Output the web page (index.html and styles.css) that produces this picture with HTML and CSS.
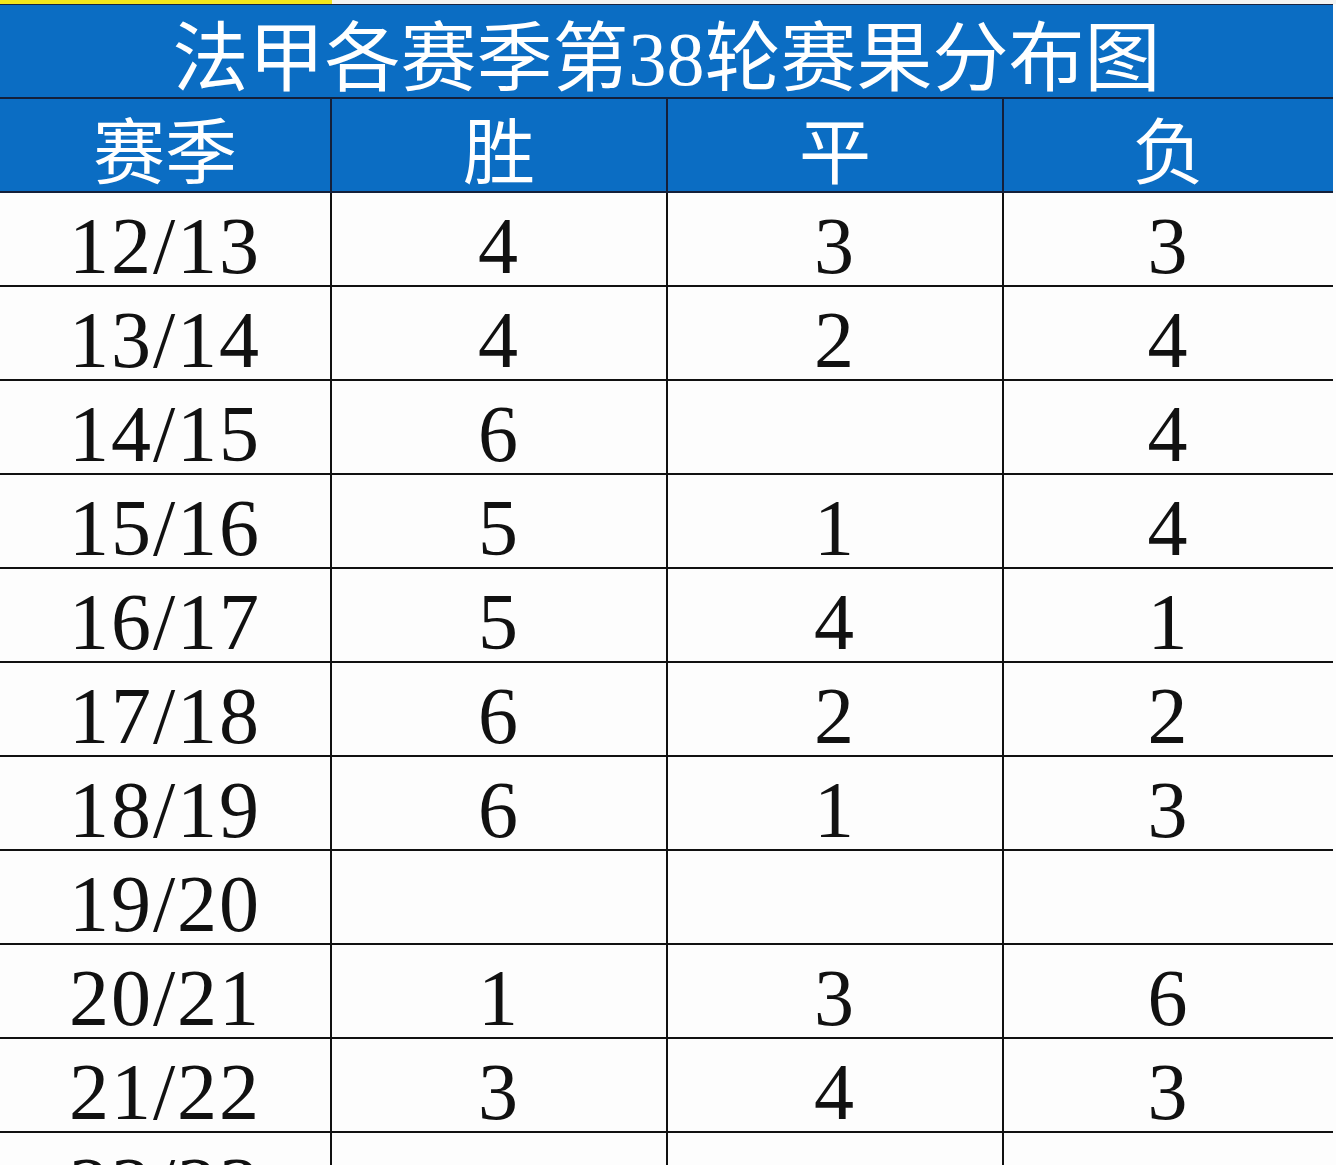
FILE: index.html
```html
<!DOCTYPE html>
<html lang="zh">
<head>
<meta charset="utf-8">
<title>法甲各赛季第38轮赛果分布图</title>
<link rel="stylesheet" href="styles.css">
</head>
<body>
<div class="topstrip"><div class="yellow"></div></div>
<div class="sheet">
  <div class="title">法甲各赛季第38轮赛果分布图</div>
  <div class="cell head">赛季</div><div class="cell head">胜</div><div class="cell head">平</div><div class="cell head last">负</div>
  <div class="cell">12/13</div><div class="cell">4</div><div class="cell">3</div><div class="cell last">3</div>
  <div class="cell">13/14</div><div class="cell">4</div><div class="cell">2</div><div class="cell last">4</div>
  <div class="cell">14/15</div><div class="cell">6</div><div class="cell"></div><div class="cell last">4</div>
  <div class="cell">15/16</div><div class="cell">5</div><div class="cell">1</div><div class="cell last">4</div>
  <div class="cell">16/17</div><div class="cell">5</div><div class="cell">4</div><div class="cell last">1</div>
  <div class="cell">17/18</div><div class="cell">6</div><div class="cell">2</div><div class="cell last">2</div>
  <div class="cell">18/19</div><div class="cell">6</div><div class="cell">1</div><div class="cell last">3</div>
  <div class="cell">19/20</div><div class="cell"></div><div class="cell"></div><div class="cell last"></div>
  <div class="cell">20/21</div><div class="cell">1</div><div class="cell">3</div><div class="cell last">6</div>
  <div class="cell">21/22</div><div class="cell">3</div><div class="cell">4</div><div class="cell last">3</div>
  <div class="cell">22/23</div><div class="cell"></div><div class="cell"></div><div class="cell last"></div>
</div>
</body>
</html>
```
FILE: styles.css
```css
html, body {
  margin: 0;
  padding: 0;
  background: #fdfdfd;
  overflow: hidden;
}
.topstrip {
  height: 4px;
  background: #f4f4f2;
}
.yellow {
  width: 332px;
  height: 4px;
  background: #f3e61a;
}
.sheet {
  width: 1333px;
  display: grid;
  grid-template-columns: 332px 336px 336px 329px;
  grid-auto-rows: 94px;
  border-top: 1px solid #1a2440;
}
.title {
  grid-column: 1 / 5;
  height: 94px;
  box-sizing: border-box;
  background: #0b6dc3;
  border-bottom: 2px solid #14203a;
  color: #fff;
  font-family: "Liberation Serif", "Noto Sans CJK SC", serif;
  font-size: 76px;
  line-height: 1;
  display: flex;
  align-items: center;
  justify-content: center;
  padding-top: 16px;
}
.cell {
  box-sizing: border-box;
  border-right: 2px solid #111;
  border-bottom: 2px solid #111;
  display: flex;
  align-items: center;
  justify-content: center;
  padding-top: 14px;
  font-family: "Liberation Serif", "Noto Sans CJK SC", serif;
  font-size: 80px;
  letter-spacing: 2px;
  color: #111;
  background: #fdfdfd;
}
.cell.last {
  border-right: none;
}
.head {
  background: #0b6dc3;
  color: #fff;
  font-family: "Noto Sans CJK SC", serif;
  font-size: 72px;
  line-height: 1;
  letter-spacing: 0;
  padding-top: 4px;
  border-bottom-color: #14203a;
  border-right-color: #14203a;
}
```
